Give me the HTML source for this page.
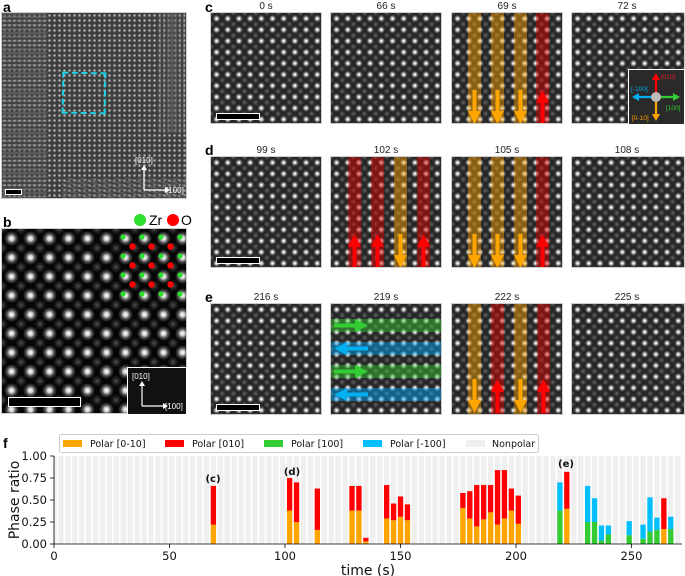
<!DOCTYPE html>
<html><head><meta charset="utf-8"><style>
*{margin:0;padding:0;box-sizing:border-box}
body{width:685px;height:576px;background:#fff;position:relative;overflow:hidden;font-family:"Liberation Sans",sans-serif}
.abs{position:absolute}
.lbl{position:absolute;font-weight:bold;font-size:14px;line-height:14px}
.t{position:absolute;font-size:10px;color:#222;text-align:center;width:112px}
.img{position:absolute;width:112px;height:112px;overflow:hidden;background-color:#262626;
background-image:radial-gradient(circle,#fff 0,#e0e0e0 1.1px,rgba(150,150,150,.6) 2.4px,rgba(40,40,40,0) 3.8px),
radial-gradient(circle,rgba(150,150,150,.6) 0,rgba(100,100,100,.4) 1.8px,rgba(40,40,40,0) 3.4px);
background-size:11.2px 11.2px,11.2px 11.2px;background-position:0 0,5.6px 5.6px;border:1px solid #ccc}
.vs{position:absolute;top:0;width:13px;height:112px}
.hs{position:absolute;left:0;width:112px;height:13px}
.o{background:rgba(255,165,0,.45)}.r{background:rgba(230,0,0,.45)}.g{background:rgba(50,205,50,.45)}.b{background:rgba(0,170,255,.45)}
.sb{position:absolute;border:1.5px solid #fff;background:#000}
</style></head><body>
<svg width="0" height="0" style="position:absolute"><defs>
<symbol id="dn" viewBox="0 0 13 34"><polygon points="4.5,0 8.5,0 8.5,21 13,21 6.5,34 0,21 4.5,21"/></symbol>
<symbol id="up" viewBox="0 0 13 34"><polygon points="4.5,34 8.5,34 8.5,13 13,13 6.5,0 0,13 4.5,13"/></symbol>
<symbol id="rt" viewBox="0 0 34 13"><polygon points="0,4.5 0,8.5 21,8.5 21,13 34,6.5 21,0 21,4.5"/></symbol>
<symbol id="lt" viewBox="0 0 34 13"><polygon points="34,4.5 34,8.5 13,8.5 13,13 0,6.5 13,0 13,4.5"/></symbol>
</defs></svg>

<!-- panel a -->
<div class="lbl" style="left:3px;top:0">a</div>
<div class="abs" style="left:1px;top:12px;width:186px;height:187px;background-color:#3e3e3e;
background-image:radial-gradient(circle,#ddd 0,rgba(180,180,180,.7) 0.9px,rgba(70,70,70,0) 1.9px);background-size:5px 5px;border:1px solid #ccc;overflow:hidden">
<div class="abs" style="left:0;top:0;width:45px;height:187px;background:repeating-linear-gradient(0deg,rgba(70,70,70,.6) 0 2px,rgba(130,130,130,.4) 2px 4px)"></div>
<div class="abs" style="left:155px;top:0;width:31px;height:120px;background:repeating-linear-gradient(90deg,rgba(70,70,70,.55) 0 2px,rgba(130,130,130,.4) 2px 4px)"></div>
<div class="abs" style="left:60px;top:165px;width:126px;height:22px;background:repeating-linear-gradient(20deg,rgba(70,70,70,.5) 0 2px,rgba(130,130,130,.35) 2px 4px)"></div>
</div>
<div class="abs" style="left:62px;top:72px;width:44px;height:42px;border:2px dashed #1ad3e6;transform:rotate(1deg)"></div>
<div class="sb" style="left:5px;top:189px;width:17px;height:6px"></div>
<svg class="abs" style="left:130px;top:155px" width="60" height="42"><g stroke="#fff" stroke-width="1.2" fill="#fff"><line x1="14" y1="35" x2="14" y2="14"/><polygon points="11,15 17,15 14,10" stroke="none"/><line x1="14" y1="35" x2="36" y2="35"/><polygon points="35,32 35,38 40,35" stroke="none"/></g>
<text x="5" y="8" font-size="8" fill="#fff" font-family="Liberation Sans">[010]</text><text x="36" y="38" font-size="8" fill="#fff" font-family="Liberation Sans">[100]</text></svg>

<!-- panel b -->
<div class="lbl" style="left:3px;top:215px">b</div>
<div class="abs" style="left:134px;top:214px;width:12px;height:12px;border-radius:50%;background:#2de02d"></div>
<div class="abs" style="left:149px;top:212px;font-size:14px">Zr</div>
<div class="abs" style="left:167px;top:214px;width:12px;height:12px;border-radius:50%;background:#f00"></div>
<div class="abs" style="left:181px;top:212px;font-size:14px">O</div>
<div class="abs" style="left:1px;top:228px;width:186px;height:186px;border:1px solid #ccc;background-color:#050505;
background-image:radial-gradient(circle,#fff 0,#d8d8d8 2px,rgba(140,140,140,.55) 4.5px,rgba(0,0,0,0) 7.5px),
radial-gradient(circle,rgba(100,100,100,.8) 0,rgba(60,60,60,.5) 3px,rgba(0,0,0,0) 6px);
background-size:19px 19px,19px 19px;background-position:0 0,9.5px 9.5px"></div>
<svg class="abs" style="left:118px;top:232px" width="70" height="70">
<g fill="#2de02d"><circle cx="5" cy="5" r="2.6"/><circle cx="24" cy="5" r="2.6"/><circle cx="43" cy="5" r="2.6"/><circle cx="62" cy="5" r="2.6"/>
<circle cx="5" cy="24" r="2.6"/><circle cx="24" cy="24" r="2.6"/><circle cx="43" cy="24" r="2.6"/><circle cx="62" cy="24" r="2.6"/>
<circle cx="5" cy="43" r="2.6"/><circle cx="24" cy="43" r="2.6"/><circle cx="43" cy="43" r="2.6"/><circle cx="62" cy="43" r="2.6"/>
<circle cx="5" cy="62" r="2.6"/><circle cx="24" cy="62" r="2.6"/><circle cx="43" cy="62" r="2.6"/><circle cx="62" cy="62" r="2.6"/></g>
<g fill="#f00"><circle cx="14.5" cy="14.5" r="3.2"/><circle cx="33.5" cy="14.5" r="3.2"/><circle cx="52.5" cy="14.5" r="3.2"/>
<circle cx="14.5" cy="33.5" r="3.2"/><circle cx="33.5" cy="33.5" r="3.2"/><circle cx="52.5" cy="33.5" r="3.2"/>
<circle cx="14.5" cy="52.5" r="3.2"/><circle cx="33.5" cy="52.5" r="3.2"/><circle cx="52.5" cy="52.5" r="3.2"/></g></svg>
<div class="sb" style="left:8px;top:397px;width:73px;height:10px"></div>
<div class="abs" style="left:127px;top:367px;width:60px;height:48px;border:1.5px solid #fff;background:#111"></div>
<svg class="abs" style="left:128px;top:368px" width="58" height="46"><g stroke="#fff" stroke-width="1.2" fill="#fff"><line x1="14" y1="38" x2="14" y2="18"/><polygon points="11,18 17,18 14,13" stroke="none"/><line x1="14" y1="38" x2="36" y2="38"/><polygon points="35,35 35,41 40,38" stroke="none"/></g>
<text x="4" y="11" font-size="8" fill="#fff" font-family="Liberation Sans">[010]</text><text x="37" y="41" font-size="8" fill="#fff" font-family="Liberation Sans">[100]</text></svg>

<!-- c row -->
<div class="lbl" style="left:205px;top:0">c</div>
<div class="t" style="left:210px;top:1px">0 s</div><div class="t" style="left:330px;top:1px">66 s</div><div class="t" style="left:451px;top:1px">69 s</div><div class="t" style="left:571px;top:1px">72 s</div>
<div class="img" style="left:210px;top:12px"><div class="sb" style="left:5px;top:100px;width:44px;height:7px"></div></div>
<div class="img" style="left:330px;top:12px"></div>
<div class="img" style="left:451px;top:12px">
<div class="vs o" style="left:16px"></div><div class="vs o" style="left:39px"></div><div class="vs o" style="left:62px"></div><div class="vs r" style="left:84px"></div>
<svg class="abs" style="left:16px;top:77px" width="13" height="34" fill="#ffa500"><use href="#dn"/></svg>
<svg class="abs" style="left:39px;top:77px" width="13" height="34" fill="#ffa500"><use href="#dn"/></svg>
<svg class="abs" style="left:62px;top:77px" width="13" height="34" fill="#ffa500"><use href="#dn"/></svg>
<svg class="abs" style="left:84px;top:77px" width="13" height="34" fill="#f00"><use href="#up"/></svg></div>
<div class="img" style="left:571px;top:12px;width:114px"></div>
<div class="abs" style="left:628px;top:69px;width:57px;height:56px;border:1.5px solid #fff;background:#2a2a2a"></div>
<svg class="abs" style="left:628px;top:69px" width="57" height="56" font-family="Liberation Sans" font-size="6.5">
<line x1="28" y1="28" x2="28" y2="10" stroke="#f00" stroke-width="2.2"/><polygon points="24,11 32,11 28,4" fill="#f00"/>
<line x1="28" y1="28" x2="28" y2="46" stroke="#ffa500" stroke-width="2.2"/><polygon points="24,45 32,45 28,52" fill="#ffa500"/>
<line x1="28" y1="28" x2="10" y2="28" stroke="#00b0f0" stroke-width="2.2"/><polygon points="11,24 11,32 4,28" fill="#00b0f0"/>
<line x1="28" y1="28" x2="46" y2="28" stroke="#33cc33" stroke-width="2.2"/><polygon points="45,24 45,32 52,28" fill="#33cc33"/>
<circle cx="28" cy="28" r="5" fill="#bbb"/>
<text x="33" y="10" fill="#e02020">[010]</text><text x="3" y="22" fill="#00b0f0">[-100]</text><text x="38" y="41" fill="#33cc33">[100]</text><text x="4" y="51" fill="#ffa500">[0-10]</text></svg>

<!-- d row -->
<div class="lbl" style="left:205px;top:143px">d</div>
<div class="t" style="left:210px;top:145px">99 s</div><div class="t" style="left:330px;top:145px">102 s</div><div class="t" style="left:451px;top:145px">105 s</div><div class="t" style="left:571px;top:145px">108 s</div>
<div class="img" style="left:210px;top:156px"><div class="sb" style="left:5px;top:100px;width:44px;height:7px"></div></div>
<div class="img" style="left:330px;top:156px">
<div class="vs r" style="left:17px"></div><div class="vs r" style="left:40px"></div><div class="vs o" style="left:63px"></div><div class="vs r" style="left:86px"></div>
<svg class="abs" style="left:17px;top:77px" width="13" height="34" fill="#f00"><use href="#up"/></svg>
<svg class="abs" style="left:40px;top:77px" width="13" height="34" fill="#f00"><use href="#up"/></svg>
<svg class="abs" style="left:63px;top:77px" width="13" height="34" fill="#ffa500"><use href="#dn"/></svg>
<svg class="abs" style="left:86px;top:77px" width="13" height="34" fill="#f00"><use href="#up"/></svg></div>
<div class="img" style="left:451px;top:156px">
<div class="vs o" style="left:16px"></div><div class="vs o" style="left:39px"></div><div class="vs o" style="left:62px"></div><div class="vs r" style="left:84px"></div>
<svg class="abs" style="left:16px;top:77px" width="13" height="34" fill="#ffa500"><use href="#dn"/></svg>
<svg class="abs" style="left:39px;top:77px" width="13" height="34" fill="#ffa500"><use href="#dn"/></svg>
<svg class="abs" style="left:62px;top:77px" width="13" height="34" fill="#ffa500"><use href="#dn"/></svg>
<svg class="abs" style="left:84px;top:77px" width="13" height="34" fill="#f00"><use href="#up"/></svg></div>
<div class="img" style="left:571px;top:156px;width:114px"></div>

<!-- e row -->
<div class="lbl" style="left:205px;top:290px">e</div>
<div class="t" style="left:210px;top:292px">216 s</div><div class="t" style="left:330px;top:292px">219 s</div><div class="t" style="left:451px;top:292px">222 s</div><div class="t" style="left:571px;top:292px">225 s</div>
<div class="img" style="left:210px;top:303px"><div class="sb" style="left:5px;top:100px;width:44px;height:7px"></div></div>
<div class="img" style="left:330px;top:303px">
<div class="hs g" style="top:15px"></div><div class="hs b" style="top:38px"></div><div class="hs g" style="top:61px"></div><div class="hs b" style="top:84px"></div>
<svg class="abs" style="left:3px;top:15px" width="34" height="13" fill="#33cc33"><use href="#rt"/></svg>
<svg class="abs" style="left:3px;top:38px" width="34" height="13" fill="#00b0f0"><use href="#lt"/></svg>
<svg class="abs" style="left:3px;top:61px" width="34" height="13" fill="#33cc33"><use href="#rt"/></svg>
<svg class="abs" style="left:3px;top:84px" width="34" height="13" fill="#00b0f0"><use href="#lt"/></svg></div>
<div class="img" style="left:451px;top:303px">
<div class="vs o" style="left:16px"></div><div class="vs r" style="left:39px"></div><div class="vs o" style="left:62px"></div><div class="vs r" style="left:85px"></div>
<svg class="abs" style="left:16px;top:75px" width="13" height="34" fill="#ffa500"><use href="#dn"/></svg>
<svg class="abs" style="left:39px;top:75px" width="13" height="34" fill="#f00"><use href="#up"/></svg>
<svg class="abs" style="left:62px;top:75px" width="13" height="34" fill="#ffa500"><use href="#dn"/></svg>
<svg class="abs" style="left:85px;top:75px" width="13" height="34" fill="#f00"><use href="#up"/></svg></div>
<div class="img" style="left:571px;top:303px;width:114px"></div>

<!-- panel f -->
<div class="lbl" style="left:3px;top:436px">f</div>
<svg class="abs" style="left:0;top:420px" width="685" height="156" font-family="DejaVu Sans, Liberation Sans, sans-serif">
<defs><pattern id="st" width="6.93" height="200" patternUnits="userSpaceOnUse" x="51.35"><rect width="5.3" height="200" fill="#efefef"/></pattern>
<clipPath id="ax"><rect x="54" y="36" width="628" height="88"/></clipPath></defs>
<rect x="54" y="36" width="628" height="88" fill="url(#st)" clip-path="url(#ax)"/>
<g transform="translate(54,124) scale(2.31,-88)">
<g fill="#ffa500">
<rect x="67.85" y="0" width="2.3" height=".22"/><rect x="100.85" width="2.3" height=".38"/><rect x="103.85" width="2.3" height=".25"/><rect x="112.85" width="2.3" height=".16"/>
<rect x="127.85" width="2.3" height=".38"/><rect x="130.85" width="2.3" height=".38"/><rect x="133.85" width="2.3" height=".03"/>
<rect x="142.85" width="2.3" height=".29"/><rect x="145.85" width="2.3" height=".27"/><rect x="148.85" width="2.3" height=".31"/><rect x="151.85" width="2.3" height=".27"/>
<rect x="175.85" width="2.3" height=".41"/><rect x="178.85" width="2.3" height=".29"/><rect x="181.85" width="2.3" height=".20"/><rect x="184.85" width="2.3" height=".28"/><rect x="187.85" width="2.3" height=".36"/><rect x="190.85" width="2.3" height=".22"/><rect x="193.85" width="2.3" height=".29"/><rect x="196.85" width="2.3" height=".38"/><rect x="199.85" width="2.3" height=".23"/>
<rect x="220.85" width="2.3" height=".40"/><rect x="262.85" width="2.3" height=".17"/></g>
<g fill="#f00">
<rect x="67.85" y=".22" width="2.3" height=".44"/><rect x="100.85" y=".38" width="2.3" height=".37"/><rect x="103.85" y=".25" width="2.3" height=".45"/><rect x="112.85" y=".16" width="2.3" height=".47"/>
<rect x="127.85" y=".38" width="2.3" height=".28"/><rect x="130.85" y=".38" width="2.3" height=".28"/><rect x="133.85" y=".03" width="2.3" height=".04"/>
<rect x="142.85" y=".29" width="2.3" height=".38"/><rect x="145.85" y=".27" width="2.3" height=".19"/><rect x="148.85" y=".31" width="2.3" height=".23"/><rect x="151.85" y=".27" width="2.3" height=".18"/>
<rect x="175.85" y=".41" width="2.3" height=".17"/><rect x="178.85" y=".29" width="2.3" height=".31"/><rect x="181.85" y=".20" width="2.3" height=".47"/><rect x="184.85" y=".28" width="2.3" height=".39"/><rect x="187.85" y=".36" width="2.3" height=".31"/><rect x="190.85" y=".22" width="2.3" height=".62"/><rect x="193.85" y=".29" width="2.3" height=".55"/><rect x="196.85" y=".38" width="2.3" height=".25"/><rect x="199.85" y=".23" width="2.3" height=".32"/>
<rect x="220.85" y=".40" width="2.3" height=".42"/><rect x="262.85" y=".17" width="2.3" height=".35"/></g>
<g fill="#33cc33">
<rect x="217.85" width="2.3" height=".38"/><rect x="229.85" width="2.3" height=".25"/><rect x="232.85" width="2.3" height=".25"/><rect x="235.85" width="2.3" height=".04"/><rect x="238.85" width="2.3" height=".11"/><rect x="247.85" width="2.3" height=".10"/><rect x="253.85" width="2.3" height=".06"/><rect x="256.85" width="2.3" height=".14"/><rect x="259.85" width="2.3" height=".16"/><rect x="265.85" width="2.3" height=".17"/></g>
<g fill="#00bfff">
<rect x="217.85" y=".38" width="2.3" height=".32"/><rect x="229.85" y=".25" width="2.3" height=".41"/><rect x="232.85" y=".25" width="2.3" height=".27"/><rect x="235.85" y=".04" width="2.3" height=".17"/><rect x="238.85" y=".11" width="2.3" height=".10"/><rect x="247.85" y=".10" width="2.3" height=".16"/><rect x="253.85" y=".06" width="2.3" height=".16"/><rect x="256.85" y=".14" width="2.3" height=".39"/><rect x="259.85" y=".16" width="2.3" height=".14"/><rect x="265.85" y=".17" width="2.3" height=".14"/></g>
</g>
<g stroke="#000" stroke-width="0.8" fill="none"><line x1="54" y1="36" x2="54" y2="124"/><line x1="54" y1="124" x2="682" y2="124"/>
<line x1="50" y1="36" x2="54" y2="36"/><line x1="50" y1="58" x2="54" y2="58"/><line x1="50" y1="80" x2="54" y2="80"/><line x1="50" y1="102" x2="54" y2="102"/><line x1="50" y1="124" x2="54" y2="124"/>
<line x1="54" y1="124" x2="54" y2="128"/><line x1="169.5" y1="124" x2="169.5" y2="128"/><line x1="285" y1="124" x2="285" y2="128"/><line x1="400.5" y1="124" x2="400.5" y2="128"/><line x1="516" y1="124" x2="516" y2="128"/><line x1="631.5" y1="124" x2="631.5" y2="128"/></g>
<g font-size="11.5" text-anchor="end" fill="#111"><text x="47" y="40">1.00</text><text x="47" y="62">0.75</text><text x="47" y="84">0.50</text><text x="47" y="106">0.25</text><text x="47" y="128">0.00</text></g>
<g font-size="11.5" text-anchor="middle" fill="#111"><text x="54" y="140">0</text><text x="169.5" y="140">50</text><text x="285" y="140">100</text><text x="400.5" y="140">150</text><text x="516" y="140">200</text><text x="631.5" y="140">250</text></g>
<text x="368" y="155" font-size="14" text-anchor="middle" fill="#111">time (s)</text>
<text transform="translate(19,80) rotate(-90)" font-size="14" text-anchor="middle" fill="#111">Phase ratio</text>
<g font-size="10" font-weight="bold" text-anchor="middle" fill="#111"><text x="213" y="62">(c)</text><text x="292" y="55">(d)</text><text x="566" y="47">(e)</text></g>
<rect x="59.5" y="14.5" width="479" height="18" rx="2" fill="#fff" stroke="#ccc"/>
<g font-size="9.5" fill="#111"><rect x="63" y="20" width="19" height="7" fill="#ffa500"/><text x="90" y="27">Polar [0-10]</text>
<rect x="165" y="20" width="19" height="7" fill="#f00"/><text x="192" y="27">Polar [010]</text>
<rect x="264" y="20" width="19" height="7" fill="#33cc33"/><text x="291" y="27">Polar [100]</text>
<rect x="363" y="20" width="19" height="7" fill="#00bfff"/><text x="390" y="27">Polar [-100]</text>
<rect x="466" y="20" width="19" height="7" fill="#efefef"/><text x="492" y="27">Nonpolar</text></g>
</svg>
</body></html>
